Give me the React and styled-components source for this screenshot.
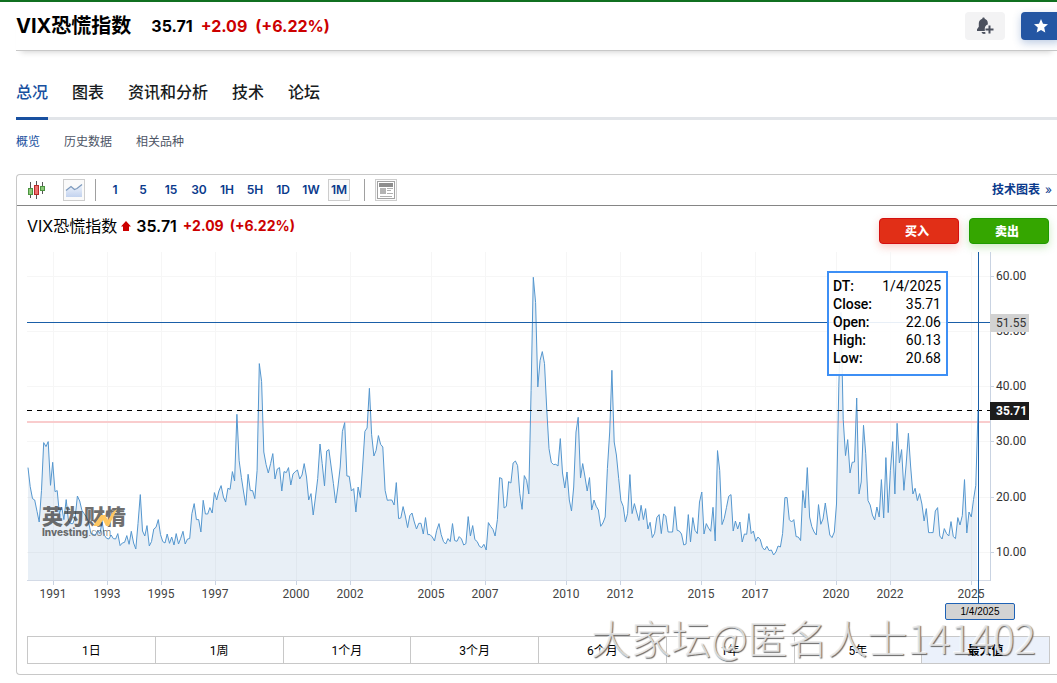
import React from "react";
import styled, { createGlobalStyle, css } from "styled-components";

const Global = createGlobalStyle`
  *, *::before, *::after { box-sizing: border-box; }
  body {
    margin: 0;
    background: #fff;
    color: #000;
    font-family: Inter, "Noto Sans CJK SC", sans-serif;
    overflow-x: hidden;
  }
  button { font-family: inherit; padding: 0; cursor: pointer; }
  a { text-decoration: none; color: inherit; }
`;

const Page = styled.main`
  border-top: 2px solid #107020;
  padding-left: 16px;
  overflow: hidden;
`;

/* ---------- header ---------- */
const Header = styled.header`
  display: flex;
  align-items: center;
  height: 49px;
  border-bottom: 1px solid #c8c8c8;
  box-shadow: 0 6px 6px -5px rgba(0, 0, 0, 0.18);
`;
const Title = styled.h1`
  margin: 0 20px 0 0;
  font-size: 20px;
  line-height: 28px;
  font-weight: 700;
`;
const Quote = styled.div`
  display: flex;
  flex: 1;
  gap: 8px;
  font-size: 16px;
  line-height: 24px;
  font-weight: 700;
`;
const Change = styled.span`
  color: #cc0000;
`;
const Actions = styled.div`
  display: flex;
  gap: 16px;
  margin-right: -4px;
`;
const IconButton = styled.button`
  display: flex;
  align-items: center;
  justify-content: center;
  width: 40px;
  height: 28px;
  border: 0;
  border-radius: 4px;
  background: ${(p) => (p.$primary ? "#2456a3" : "#f3f3f4")};
  box-shadow: ${(p) => (p.$primary ? "0 3px 8px rgba(36, 86, 163, 0.3)" : "none")};
`;

/* ---------- navigation ---------- */
const Tabs = styled.nav`
  display: flex;
  gap: 24px;
  margin-top: 29px;
  border-bottom: 3px solid #e2e5e9;
`;
const Tab = styled.a`
  margin-bottom: -3px;
  padding-bottom: 13px;
  border-bottom: 3px solid ${(p) => (p.$active ? "#1850a0" : "transparent")};
  color: ${(p) => (p.$active ? "#1850a0" : "#181c21")};
  font-size: 16px;
  line-height: 24px;
  font-weight: 500;
`;
const SubTabs = styled.nav`
  display: flex;
  gap: 24px;
  margin: 13px 0 23px;
`;
const SubTab = styled.a`
  color: ${(p) => (p.$active ? "#1850a0" : "#4d5566")};
  font-size: 12px;
  line-height: 18px;
`;

/* ---------- panel ---------- */
const Panel = styled.section`
  border: 1px solid #c8c8c8;
  border-right: 0;
  border-radius: 4px 0 0 4px;
  padding-bottom: 10px;
`;
const Toolbar = styled.div`
  display: flex;
  align-items: center;
  height: 31px;
  padding: 0 5px 0 8px;
  border-bottom: 1px solid #858585;
`;
const Tool = styled.button`
  display: flex;
  align-items: center;
  justify-content: center;
  width: 22px;
  height: 22px;
  border: 1px solid ${(p) => (p.$framed ? "#cdcdcd" : "transparent")};
  background: ${(p) => (p.$framed ? "#fafafa" : "transparent")};
`;
const ToolPair = styled.div`
  display: flex;
  gap: 16px;
`;
const Divider = styled.span`
  width: 1px;
  height: 22px;
  margin: 0 ${(p) => p.$after}px 0 ${(p) => p.$before}px;
  background: #a0a0a0;
`;
const Intervals = styled.div`
  display: flex;
  gap: 6px;
`;
const Interval = styled.button`
  display: flex;
  justify-content: center;
  width: 22px;
  height: 22px;
  border: 1px solid ${(p) => (p.$active ? "#cdcdcd" : "transparent")};
  background: ${(p) => (p.$active ? "#fafafa" : "transparent")};
  color: #0a3a8c;
  font-size: 12px;
  font-weight: 600;
  line-height: 20px;
  white-space: nowrap;
`;
const TechLink = styled.a`
  margin-left: auto;
  color: #0a3a8c;
  font-size: 12px;
  font-weight: 700;
  line-height: 18px;
`;
const Chevrons = styled.span`
  margin-left: 5px;
  font-weight: 400;
`;

const TitleRow = styled.div`
  display: flex;
  justify-content: space-between;
  height: 46px;
  padding: 0 8px 0 10px;
`;
const ChartTitle = styled.div`
  display: flex;
  align-items: center;
  height: 40px;
  font-size: 16px;
  line-height: 24px;
`;
const UpArrow = styled.svg`
  margin: 0 5px 0 4px;
`;
const Last = styled.strong`
  font-weight: 600;
`;
const Delta = styled.span`
  margin-left: 6px;
  color: #cc0000;
  font-size: 14px;
  font-weight: 700;
`;
const Trade = styled.div`
  display: flex;
  gap: 10px;
  padding-top: 12px;
`;
const TradeButton = styled.button`
  width: 80px;
  height: 26px;
  padding: 0 4px 1px 0;
  border: 1px solid ${(p) => (p.$sell ? "#1f9a00" : "#d40f0f")};
  border-radius: 4px;
  background: ${(p) => (p.$sell ? "#35a600" : "#e12f17")};
  box-shadow: 0 3px 8px ${(p) => (p.$sell ? "rgba(53,166,0,.25)" : "rgba(225,47,23,.25)")};
  color: #fff;
  font-size: 12px;
  font-weight: 900;
`;

/* ---------- chart ---------- */
const Chart = styled.div`
  position: relative;
  display: grid;
  grid-template-columns: 1fr 67px;
  grid-template-rows: 329px 55px;
  padding-left: 10px;
  font-family: Roboto, sans-serif;
`;
const Plot = styled.div`
  position: relative;
`;
const PlotSvg = styled.svg`
  display: block;
  width: 100%;
  height: 329px;
  overflow: visible;
`;
const YAxis = styled.div`
  position: relative;
  border-left: 1px solid #c9d3e2;
`;
const axisText = css`
  position: absolute;
  font-size: 12px;
  line-height: 18px;
`;
const YLabel = styled.span`
  ${axisText}
  left: 5px;
  margin-top: -9px;
  color: #333;
  &::before {
    content: "";
    position: absolute;
    left: -5px;
    top: 9px;
    width: 3px;
    height: 1px;
    background: #c9d3e2;
  }
`;
const PriceTag = styled.span`
  ${axisText}
  left: -1px;
  width: 39px;
  margin-top: -9px;
  padding-left: 6px;
  background: ${(p) => (p.$last ? "#1c1c1c" : "#d2d2d2")};
  color: ${(p) => (p.$last ? "#fff" : "#333")};
  font-weight: ${(p) => (p.$last ? 700 : 400)};
`;
const XAxis = styled.div`
  position: relative;
`;
const XLabel = styled.span`
  ${axisText}
  top: 4px;
  width: 40px;
  margin-left: -20px;
  text-align: center;
  color: #444;
  &::before {
    content: "";
    position: absolute;
    left: 20px;
    top: -4px;
    width: 1px;
    height: 4px;
    background: #c9d3e2;
  }
`;
const Crosshair = styled.span`
  position: absolute;
  top: 0;
  width: 1px;
  height: 351px;
  background: #1a5fa8;
`;
const DateTag = styled.span`
  position: absolute;
  top: 22px;
  width: 70px;
  height: 17px;
  margin-left: -33px;
  border: 1px solid #1f62b5;
  border-radius: 2px;
  background: #d3d3d3;
  font: 10px/15px "Liberation Sans", sans-serif;
  text-align: center;
`;
const Tooltip = styled.dl`
  position: absolute;
  top: 19px;
  right: 42px;
  display: grid;
  grid-template-columns: auto auto;
  grid-auto-rows: 18px;
  justify-content: space-between;
  width: 121px;
  height: 105px;
  margin: 0;
  padding: 4px 5px 7px 4px;
  border: 2px solid #3d8ff5;
  background: rgba(255, 255, 255, 0.9);
  font-size: 14px;
  line-height: 18px;
`;
const Term = styled.dt`
  font-weight: 500;
`;
const Value = styled.dd`
  margin: 0;
  text-align: right;
`;
const Brand = styled.div`
  position: absolute;
  left: 15px;
  top: 254px;
  color: #333;
  opacity: 0.7;
  font-family: Inter, "Noto Sans CJK SC", sans-serif;
`;
const BrandName = styled.div`
  font-size: 21px;
  line-height: 21px;
  font-weight: 900;
`;
const BrandSite = styled.div`
  font-size: 10px;
  line-height: 10px;
  font-weight: 800;
`;
const BrandSuffix = styled.span`
  font-weight: 300;
`;
const BrandMark = styled.svg`
  position: absolute;
  left: 51px;
  top: 2px;
`;

const Ranges = styled.div`
  display: flex;
  margin: 0 7px 0 10px;
  border: 1px solid #c8c8c8;
`;
const Range = styled.button`
  flex: 1;
  height: 26px;
  padding-bottom: 2px;
  border: 0;
  border-left: ${(p) => (p.$first ? "0" : "1px solid #c8c8c8")};
  background: ${(p) => (p.$active ? "#ebf1fb" : "#fff")};
  color: #000;
  font-family: Roboto, "Noto Sans CJK SC", sans-serif;
  font-size: 12px;
  font-weight: ${(p) => (p.$active ? 700 : 400)};
`;
const RangeArea = styled.div`
  position: relative;
`;
const Stamp = styled.div`
  position: absolute;
  right: 21px;
  bottom: -1px;
  font-family: "Noto Sans CJK SC", sans-serif;
  font-size: 40px;
  line-height: 56px;
  font-weight: 300;
  white-space: nowrap;
  color: rgba(232, 232, 232, 0.85);
  text-shadow: 1px 1px 1px #666, -1px -1px 0 rgba(255, 255, 255, 0.7);
  pointer-events: none;
`;

/* Monthly closes since January 1990, as depth below the chart's top in thirds of a pixel. */
const LEVELS = [
  652,709,745,749,783,815,720,577,589,574,705,636,
  724,721,790,770,808,748,810,820,820,800,737,752,
  780,790,800,815,850,852,855,840,850,815,855,864,
  866,854,865,866,850,886,878,876,856,882,843,878,
  896,820,733,842,857,826,887,874,836,831,808,853,
  874,878,851,879,860,884,850,881,864,843,881,866,
  865,790,760,808,808,845,750,791,791,772,788,727,
  749,722,706,740,755,714,717,664,692,492,630,682,
  725,765,672,721,721,745,660,340,394,605,643,668,
  640,610,686,656,652,722,664,667,652,704,671,664,
  659,686,674,640,680,749,730,794,740,685,581,640,
  707,602,598,650,700,758,710,650,543,517,677,678,
  722,715,785,710,742,650,543,533,414,552,617,600,
  556,582,590,720,750,749,749,764,697,805,803,769,
  797,832,796,788,815,836,819,819,851,802,853,853,
  860,872,840,820,853,874,881,865,874,820,871,873,
  859,866,884,880,799,857,826,868,874,888,892,882,
  899,817,828,837,857,808,682,685,773,768,694,698,
  638,632,646,730,777,676,690,731,420,81,157,410,
  330,304,340,480,595,636,643,642,647,565,668,713,
  665,749,782,710,545,501,683,640,680,722,682,779,
  749,768,779,828,818,800,655,545,360,575,614,685,
  751,768,815,789,673,790,760,785,811,765,808,775,
  836,816,862,849,802,793,850,791,797,845,845,845,
  769,840,842,851,884,881,793,875,802,840,850,755,
  725,851,820,833,843,771,872,601,660,823,805,771,
  738,733,842,812,836,815,875,851,852,790,850,842,
  873,860,867,891,899,888,901,899,914,905,887,890,
  850,742,742,808,815,808,859,860,871,721,773,652,
  800,829,845,854,763,822,806,758,806,854,862,845,
  761,408,186,507,616,568,668,636,635,443,731,695,
  525,610,751,764,794,809,770,800,688,803,622,787,
  660,574,731,519,638,598,720,644,549,647,731,714,
  751,730,761,812,775,847,847,847,782,772,857,866,
  835,850,857,814,859,865,802,824,796,688,848,785,
  800,748,705,481,
];
const W = 963;
const H = 329;
const STEP = 950 / 423;
const points = LEVELS.map((l, i) => `${(1 + i * STEP).toFixed(1)},${(l / 3 - 1.7).toFixed(1)}`);
const LINE = `M${points.join("L")}`;
const AREA = `M1,${H - 1}L${points.slice(0, -1).join("L")}L950,225L950,${H - 1}Z`;

const YEARS = [
  [1991, 26], [1993, 80], [1995, 134], [1997, 188], [2000, 269], [2002, 323],
  [2005, 404], [2007, 458], [2010, 539], [2012, 593], [2015, 674], [2017, 728],
  [2020, 809], [2022, 863], [2025, 944],
];
const PRICES = [["60.00", 24], ["50.00", 79], ["40.00", 134], ["30.00", 189], ["20.00", 245], ["10.00", 300]];
const pct = (x) => `${(x / W) * 100}%`;

const BellIcon = () => (
  <svg width="18" height="18" viewBox="0 0 18 18" aria-hidden="true">
    <path d="M7.500 .5c.8 0 1.200.5 1.200 1.200 1.800.6 3.100 2.300 3.100 4.300v1.500c-1.700.5-3 2-3 4V14H1v-1.800L2.800 9.800V6.200c0-2 1.400-3.900 3.500-4.500C6.300 1 6.700.5 7.500.5z" fill="#4c515e" />
    <path d="M5.500 15h3.500l.8 1.300c-1.600 1.200-3.800.6-4.300-1.300z" fill="#4c515e" />
    <path d="M13.500 8.500v8M9.500 12.500h8" stroke="#4c515e" strokeWidth="2" />
  </svg>
);
const StarIcon = () => (
  <svg width="16" height="16" viewBox="0 0 16 16" aria-hidden="true">
    <path d="M8 1l2 4.700 5 .5-3.800 3.400 1.100 5L8 12l-4.300 2.600 1.100-5L1 6.200l5-.5z" fill="#fff" />
  </svg>
);
const CandlesIcon = () => (
  <svg width="18" height="18" viewBox="0 0 18 18" shapeRendering="crispEdges" aria-hidden="true">
    <path d="M3.500 1v16M9.500 0v18M15.500 1v12" stroke="#555" />
    <rect x="1.500" y="7.500" width="4" height="6" fill="#8cc879" stroke="#4b9440" />
    <rect x="7.500" y="4.500" width="4" height="9" fill="#ee6f6f" stroke="#b82a2a" />
    <rect x="13.500" y="5.500" width="4" height="4" fill="#8cc879" stroke="#4b9440" />
  </svg>
);
const AreaIcon = () => (
  <svg width="18" height="16" viewBox="0 0 18 16" aria-hidden="true">
    <defs>
      <linearGradient id="areaFill" x1="0" y1="0" x2="0" y2="1">
        <stop offset="0" stopColor="#eef3fb" />
        <stop offset="1" stopColor="#c3d3ef" />
      </linearGradient>
    </defs>
    <path d="M1 9l5-4 4 3 2-1 5-4v12H1z" fill="url(#areaFill)" />
    <path d="M1 8.500l5-4 3.500 3 2.500-1L17 2.500" fill="none" stroke="#7d9abd" strokeWidth="1.300" />
  </svg>
);
const NewsIcon = () => (
  <svg width="18" height="18" viewBox="0 0 18 18" shapeRendering="crispEdges" aria-hidden="true">
    <rect x="0.500" y="0.500" width="17" height="17" fill="#fff" stroke="#a2a2a2" />
    <rect x="2" y="2" width="14" height="4" fill="#8d8d8d" />
    <rect x="3" y="7" width="6" height="6" fill="#b4b4b4" />
    <path d="M10 7.500h6M10 9.500h4M10 12.500h6M3 15.500h12" stroke="#b0b0b0" />
  </svg>
);

export default function App() {
  return (
    <>
      <Global />
      <Page>
        <Header>
          <Title>VIX恐慌指数</Title>
          <Quote>
            <span>35.71</span>
            <Change>+2.09</Change>
            <Change>(+6.22%)</Change>
          </Quote>
          <Actions>
            <IconButton aria-label="创建提醒"><BellIcon /></IconButton>
            <IconButton $primary aria-label="添加自选"><StarIcon /></IconButton>
          </Actions>
        </Header>

        <Tabs>
          {["总况", "图表", "资讯和分析", "技术", "论坛"].map((t, i) => (
            <Tab key={t} href="#" $active={i === 0}>{t}</Tab>
          ))}
        </Tabs>
        <SubTabs>
          {["概览", "历史数据", "相关品种"].map((t, i) => (
            <SubTab key={t} href="#" $active={i === 0}>{t}</SubTab>
          ))}
        </SubTabs>

        <Panel>
          <Toolbar>
            <ToolPair>
              <Tool aria-label="蜡烛图"><CandlesIcon /></Tool>
              <Tool $framed aria-label="面积图"><AreaIcon /></Tool>
            </ToolPair>
            <Divider $before={10} $after={8} />
            <Intervals>
              {["1", "5", "15", "30", "1H", "5H", "1D", "1W", "1M"].map((t) => (
                <Interval key={t} $active={t === "1M"}>{t}</Interval>
              ))}
            </Intervals>
            <Divider $before={14} $after={10} />
            <Tool $framed aria-label="新闻"><NewsIcon /></Tool>
            <TechLink href="#">技术图表<Chevrons>»</Chevrons></TechLink>
          </Toolbar>

          <TitleRow>
            <ChartTitle>
              <span>VIX恐慌指数</span>
              <UpArrow width="10" height="10" viewBox="0 0 10 10" aria-hidden="true">
                <path d="M5 0L10 5.500H8V10H2V5.500H0z" fill="#cc0000" />
              </UpArrow>
              <Last>35.71</Last>
              <Delta>+2.09</Delta>
              <Delta>(+6.22%)</Delta>
            </ChartTitle>
            <Trade>
              <TradeButton>买入</TradeButton>
              <TradeButton $sell>卖出</TradeButton>
            </Trade>
          </TitleRow>

          <Chart>
            <Plot>
              <PlotSvg viewBox={`0 0 ${W} ${H}`} preserveAspectRatio="none" role="img" aria-label="VIX">
                <g stroke="#f6f6f6" shapeRendering="crispEdges">
                  {PRICES.map(([p, y]) => <line key={p} x1="0" x2={W} y1={y + 0.5} y2={y + 0.5} />)}
                  {YEARS.map(([p, x]) => <line key={p} y1="0" y2={H} x1={x + 0.5} x2={x + 0.5} />)}
                </g>
                <path d={AREA} fill="#1f5fa6" fillOpacity="0.1" />
                <rect x="0" y="169" width={W} height="2" fill="#f9cccd" />
                <path d={LINE} fill="none" stroke="#5597cf" vectorEffect="non-scaling-stroke" />
                <line x1="0" x2={W} y1="328.5" y2="328.5" stroke="#d3dae6" />
                <line x1="0" x2={W} y1="158.5" y2="158.5" stroke="#000" strokeDasharray="5 5" />
                <line x1="0" x2={W} y1="70.5" y2="70.5" stroke="#1a5fa8" />
              </PlotSvg>
              <Brand>
                <BrandName>英为财情</BrandName>
                <BrandSite>Investing<BrandSuffix>.com</BrandSuffix></BrandSite>
                <BrandMark width="26" height="20" viewBox="0 0 26 20" aria-hidden="true">
                  <path d="M0 18L8 7h4l3 5 5-8 4-3-8 17h-3l-3-6-4 6z" fill="#ffb01f" />
                </BrandMark>
              </Brand>
              <Crosshair style={{ left: pct(951) }} />
              <Tooltip>
                <Term>DT:</Term><Value>1/4/2025</Value>
                <Term>Close:</Term><Value>35.71</Value>
                <Term>Open:</Term><Value>22.06</Value>
                <Term>High:</Term><Value>60.13</Value>
                <Term>Low:</Term><Value>20.68</Value>
              </Tooltip>
            </Plot>
            <YAxis>
              {PRICES.map(([p, y]) => <YLabel key={p} style={{ top: y }}>{p}</YLabel>)}
              <PriceTag style={{ top: 71 }}>51.55</PriceTag>
              <PriceTag $last style={{ top: 159 }}>35.71</PriceTag>
            </YAxis>
            <XAxis>
              {YEARS.map(([y, x]) => <XLabel key={y} style={{ left: pct(x) }}>{y}</XLabel>)}
              <DateTag style={{ left: pct(951) }}>1/4/2025</DateTag>
            </XAxis>
          </Chart>

          <RangeArea>
            <Ranges>
              {["1日", "1周", "1个月", "3个月", "6个月", "1年", "5年", "最大值"].map((t, i) => (
                <Range key={t} $first={i === 0} $active={i === 7}>{t}</Range>
              ))}
            </Ranges>
            <Stamp>大家坛@匿名人士141402</Stamp>
          </RangeArea>
        </Panel>
      </Page>
    </>
  );
}
